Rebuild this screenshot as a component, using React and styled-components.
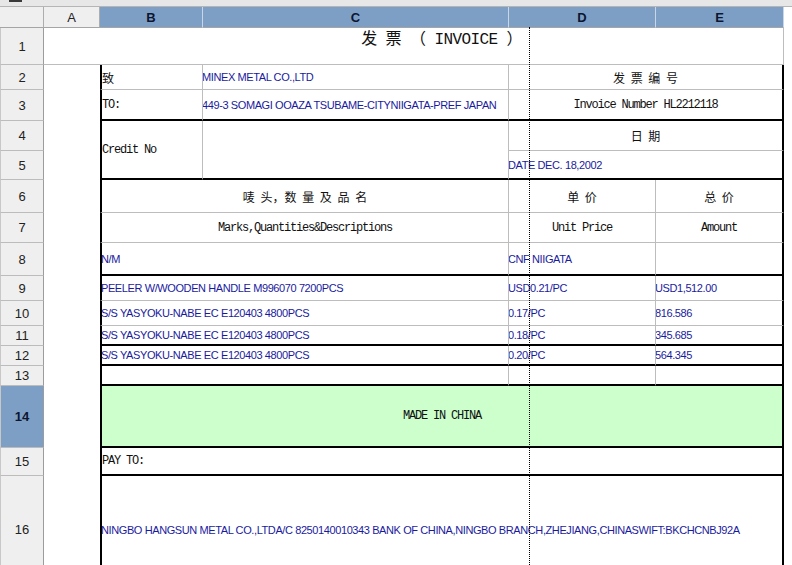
import styled, { createGlobalStyle } from "styled-components"

const GlobalStyle = createGlobalStyle`
  html, body {
    margin: 0;
    padding: 0;
    background: #fff;
    overflow: hidden;
  }
`

const G = "gray"
const K = "black"

const line = (v) => (v === K ? "2px solid #000" : v === G ? "1px solid #bdbdbd" : "none")

const Shell = styled.div`
  position: relative;
  width: 792px;
  height: 565px;
  overflow: hidden;
  background: #fff;
`

const TopStrip = styled.div`
  height: 6px;
  background: #e7e7e7;
  border-bottom: 1px solid #b5b5b5;
  display: flex;
  padding-left: 9px;
`

const StripMark = styled.span`
  width: 13px;
  height: 2px;
  background: #3a3a3a;
`

const Sheet = styled.div`
  display: grid;
  grid-template-columns: 44px 56px 103px 306px 147px 128px 8px;
  grid-template-rows: 21px 37px 25px 31px 30px 29px 33px 30px 33px 25px 25px 20px 20px 20px 62px 28px 107px;
`

const HeadBase = styled.div`
  box-sizing: border-box;
  display: flex;
  align-items: center;
  justify-content: center;
  font-family: "Liberation Sans", Arial, sans-serif;
  font-size: 13px;
  font-weight: ${(p) => (p.$selected ? "bold" : "normal")};
  color: ${(p) => (p.$selected ? "#0c1630" : "#222")};
  background: ${(p) => (p.$selected ? "#7e9fc5" : "#efefef")};
`

const ColHead = styled(HeadBase)`
  grid-column: ${(p) => p.$col};
  grid-row: 1;
  border-right: 1px solid ${(p) => (p.$selected ? "#c9d6e6" : "#adadad")};
  border-bottom: 1px solid #a5a5a5;
`

const RowHead = styled(HeadBase)`
  grid-column: 1;
  grid-row: ${(p) => p.$row};
  border-right: 1px solid #9c9c9c;
  border-bottom: 1px solid #bcbcbc;
  border-left: 1px solid #c8c8c8;
`

const Cell = styled.div`
  grid-column: ${(p) => p.$col} / span ${(p) => p.$span || 1};
  grid-row: ${(p) => p.$row} / span ${(p) => p.$rows || 1};
  box-sizing: border-box;
  display: flex;
  align-items: ${(p) => (p.$top ? "flex-start" : "center")};
  justify-content: ${(p) => (p.$align === "center" ? "center" : "flex-start")};
  padding-top: ${(p) => (p.$top ? "3px" : "0")};
  background: ${(p) => p.$bg || "#fff"};
  border-left: ${(p) => line(p.$l)};
  border-right: ${(p) => line(p.$rt)};
  border-bottom: ${(p) => line(p.$b)};
  overflow: hidden;
  white-space: nowrap;
`

const Blue = styled.span`
  font-family: "Liberation Sans", Arial, sans-serif;
  font-size: 11px;
  letter-spacing: -0.4px;
  color: #1a1a9e;
  margin-left: -1px;
`

const Mono = styled.span`
  font-family: "Liberation Mono", "Courier New", monospace;
  font-size: 12px;
  letter-spacing: -1.2px;
  color: #111;
`

const Han = styled.span`
  font-family: "Noto Sans CJK SC", sans-serif;
  font-size: 12px;
  word-spacing: 3px;
  color: #111;
`

const Title = styled.span`
  font-family: "Liberation Mono", "Noto Sans CJK SC", monospace;
  font-size: 16px;
  line-height: 18px;
  letter-spacing: -0.6px;
  color: #111;
`

const PageBreak = styled.div`
  position: absolute;
  left: 529px;
  top: 27px;
  bottom: 0;
  border-left: 1px dotted #000;
`

const kinds = { blue: Blue, mono: Mono, han: Han, title: Title }

const item = "S/S YASYOKU-NABE EC E120403 4800PCS"

const cells = [
  { row: 2, col: 3, span: 4, kind: "title", text: "发 票 （ INVOICE ）", align: "center", top: true, b: G, rt: G },

  { row: 3, col: 3, kind: "han", text: "致", l: K, rt: G, b: G },
  { row: 3, col: 4, kind: "blue", text: "MINEX METAL CO.,LTD", rt: G, b: G },
  { row: 3, col: 5, span: 2, kind: "han", text: "发 票 编 号", align: "center", rt: K, b: G },

  { row: 4, col: 3, kind: "mono", text: "TO:", l: K, rt: G, b: K },
  { row: 4, col: 4, kind: "blue", text: "449-3 SOMAGI OOAZA TSUBAME-CITYNIIGATA-PREF JAPAN", rt: G, b: K },
  { row: 4, col: 5, span: 2, kind: "mono", text: "Invoice Number HL2212118", align: "center", rt: K, b: K },

  { row: 5, rows: 2, col: 3, kind: "mono", text: "Credit No", l: K, rt: G, b: K },
  { row: 5, rows: 2, col: 4, rt: G, b: K },
  { row: 5, col: 5, span: 2, kind: "han", text: "日 期", align: "center", rt: K, b: G },
  { row: 6, col: 5, span: 2, kind: "blue", text: "DATE DEC. 18,2002", rt: K, b: K },

  { row: 7, col: 3, span: 2, kind: "han", text: "唛 头，数 量 及 品 名", align: "center", l: K, rt: G, b: G },
  { row: 7, col: 5, kind: "han", text: "单 价", align: "center", rt: G, b: G },
  { row: 7, col: 6, kind: "han", text: "总 价", align: "center", rt: K, b: G },

  { row: 8, col: 3, span: 2, kind: "mono", text: "Marks,Quantities&Descriptions", align: "center", l: K, rt: G, b: G },
  { row: 8, col: 5, kind: "mono", text: "Unit Price", align: "center", rt: G, b: G },
  { row: 8, col: 6, kind: "mono", text: "Amount", align: "center", rt: K, b: G },

  { row: 9, col: 3, span: 2, kind: "blue", text: "N/M", l: K, rt: G, b: K },
  { row: 9, col: 5, kind: "blue", text: "CNF NIIGATA", rt: G, b: K },
  { row: 9, col: 6, rt: K, b: K },

  { row: 10, col: 3, span: 2, kind: "blue", text: "PEELER W/WOODEN HANDLE M996070 7200PCS", l: K, rt: G, b: G },
  { row: 10, col: 5, kind: "blue", text: "USD0.21/PC", rt: G, b: G },
  { row: 10, col: 6, kind: "blue", text: "USD1,512.00", rt: K, b: G },

  { row: 11, col: 3, span: 2, kind: "blue", text: item, l: K, rt: G, b: G },
  { row: 11, col: 5, kind: "blue", text: "0.17/PC", rt: G, b: G },
  { row: 11, col: 6, kind: "blue", text: "816.586", rt: K, b: G },

  { row: 12, col: 3, span: 2, kind: "blue", text: item, l: K, rt: G, b: K },
  { row: 12, col: 5, kind: "blue", text: "0.18/PC", rt: G, b: K },
  { row: 12, col: 6, kind: "blue", text: "345.685", rt: K, b: K },

  { row: 13, col: 3, span: 2, kind: "blue", text: item, l: K, rt: G, b: K },
  { row: 13, col: 5, kind: "blue", text: "0.20/PC", rt: G, b: K },
  { row: 13, col: 6, kind: "blue", text: "564.345", rt: K, b: K },

  { row: 14, col: 3, span: 2, l: K, rt: G, b: K },
  { row: 14, col: 5, rt: G, b: K },
  { row: 14, col: 6, rt: K, b: K },

  { row: 15, col: 3, span: 4, kind: "mono", text: "MADE IN CHINA", align: "center", bg: "#ccffcc", l: K, rt: K, b: K },
  { row: 16, col: 3, span: 4, kind: "mono", text: "PAY TO:", l: K, rt: K, b: K },
  {
    row: 17,
    col: 3,
    span: 4,
    kind: "blue",
    text: "NINGBO HANGSUN METAL CO.,LTDA/C 8250140010343 BANK OF CHINA,NINGBO BRANCH,ZHEJIANG,CHINASWIFT:BKCHCNBJ92A",
    l: K,
    rt: K,
  },
]

const App = () => {
  return (
    <Shell>
      <GlobalStyle />
      <TopStrip>
        <StripMark />
      </TopStrip>
      <Sheet>
        <ColHead $col={1} />
        <ColHead $col={2}>A</ColHead>
        {["B", "C", "D", "E"].map((c, i) => (
          <ColHead key={c} $col={i + 3} $selected>
            {c}
          </ColHead>
        ))}

        {Array.from({ length: 16 }, (_, i) => (
          <RowHead key={i} $row={i + 2} $selected={i + 1 === 14}>
            {i + 1}
          </RowHead>
        ))}

        <Cell $row={2} $col={2} $b={G} />
        <Cell $row={3} $rows={15} $col={2} />

        {cells.map((c, i) => {
          const Text = kinds[c.kind]
          return (
            <Cell
              key={i}
              $row={c.row}
              $rows={c.rows}
              $col={c.col}
              $span={c.span}
              $align={c.align}
              $top={c.top}
              $bg={c.bg}
              $l={c.l}
              $rt={c.rt}
              $b={c.b}
            >
              {Text && <Text>{c.text}</Text>}
            </Cell>
          )
        })}
      </Sheet>
      <PageBreak />
    </Shell>
  )
}

export default App
